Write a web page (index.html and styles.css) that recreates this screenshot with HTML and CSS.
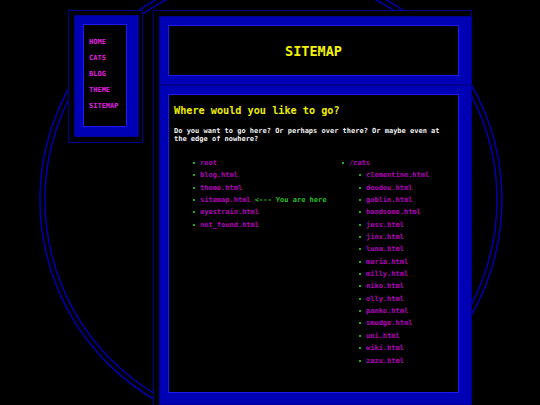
FILE: index.html
```html
<!DOCTYPE html>
<html>
<head>
<meta charset="utf-8">
<title>Sitemap</title>
<link rel="stylesheet" href="styles.css">
</head>
<body>
<svg class="orbit" width="540" height="405" viewBox="0 0 540 405">
  <circle cx="271" cy="200" r="231" fill="none" stroke="#0000a8" stroke-width="1.6"/>
  <circle cx="271" cy="200" r="226" fill="none" stroke="#0000a8" stroke-width="1.6"/>
</svg>
<div class="page">
  <nav class="frame nav-frame">
    <div class="panel nav-panel">
      <a class="nav-link">HOME</a>
      <a class="nav-link">CATS</a>
      <a class="nav-link">BLOG</a>
      <a class="nav-link">THEME</a>
      <a class="nav-link">SITEMAP</a>
    </div>
  </nav>
  <main class="frame main-frame">
    <header class="panel header-panel">
      <h1 class="title">SITEMAP</h1>
    </header>
    <section class="panel content-panel">
      <h2 class="heading">Where would you like to go?</h2>
      <p class="intro">Do you want to go here? Or perhaps over there? Or maybe even at the edge of nowhere?</p>
      <div class="lists">
        <ul class="list">
          <li>root</li>
          <li>blog.html</li>
          <li>theme.html</li>
          <li>sitemap.html <span class="here">&lt;--- You are here</span></li>
          <li>eyestrain.html</li>
          <li>not_found.html</li>
        </ul>
        <ul class="list">
          <li>/cats
            <ul class="list sub">
              <li>clementine.html</li>
              <li>doudou.html</li>
              <li>goblin.html</li>
              <li>handsome.html</li>
              <li>jess.html</li>
              <li>jinx.html</li>
              <li>luna.html</li>
              <li>maria.html</li>
              <li>milly.html</li>
              <li>niko.html</li>
              <li>olly.html</li>
              <li>panko.html</li>
              <li>smudge.html</li>
              <li>uni.html</li>
              <li>wiki.html</li>
              <li>zazu.html</li>
            </ul>
          </li>
        </ul>
      </div>
    </section>
  </main>
</div>
</body>
</html>
```
FILE: styles.css
```css
html, body {
  margin: 0;
  padding: 0;
  background: #000;
  width: 540px;
  height: 405px;
  overflow: hidden;
  font-family: "DejaVu Sans Mono", "Liberation Mono", monospace;
  font-weight: bold;
}

.orbit {
  position: absolute;
  left: 0;
  top: 0;
  z-index: 0;
}

.page {
  position: relative;
  z-index: 1;
  display: flex;
  align-items: flex-start;
  gap: 10px;
  padding: 10px 0 0 68px;
}

.frame {
  background: #000;
  border: 1px solid #00008c;
  box-sizing: border-box;
}

.panel {
  background: #000;
  border-style: solid;
  border-color: #0000b4;
  box-sizing: border-box;
  box-shadow: inset 0 0 0 1px #1c1cf0, 0 0 0 1px #000090;
}

.nav-frame {
  width: 75px;
  height: 133px;
  padding: 5px 3px 5px 6px;
}

.nav-panel {
  width: 63px;
  height: 120px;
  border-width: 8px 11px 9px 8px;
  padding: 10px 0 0 6px;
  display: flex;
  flex-direction: column;
}

.nav-link {
  font-size: 7px;
  line-height: 16px;
  color: #e020e0;
  letter-spacing: 0;
}

.main-frame {
  width: 319px;
  height: 410px;
  padding: 6px 0 0 6px;
}

.header-panel {
  width: 311px;
  height: 67px;
  border-width: 8px 12px 8px 8px;
  display: flex;
  align-items: center;
  justify-content: center;
}

.title {
  margin: 0;
  font-size: 13.5px;
  line-height: 16px;
  color: #f4f400;
  font-weight: bold;
}

.content-panel {
  margin-top: 2px;
  width: 311px;
  height: 318px;
  border-width: 8px 12px 11px 8px;
  padding: 10px 6px 0 6px;
}

.heading {
  margin: 0;
  font-size: 10.2px;
  line-height: 13px;
  color: #ecec00;
  font-weight: bold;
}

.intro {
  margin: 10px 0 0 0;
  font-size: 7px;
  line-height: 8px;
  color: #f2f2f2;
}

.lists {
  margin-top: 14px;
  display: grid;
  grid-template-columns: 149px 1fr;
}

.list {
  list-style: none;
  margin: 0;
  padding: 0 0 0 26px;
  font-size: 7px;
  line-height: 12.35px;
  color: #b400bc;
}

.list li {
  position: relative;
  white-space: nowrap;
}

.list li::before {
  content: "";
  position: absolute;
  left: -7px;
  top: 5px;
  width: 2px;
  height: 2px;
  background: #22a822;
}

.list.sub {
  padding-left: 17px;
}

.here {
  color: #22c022;
}
```
